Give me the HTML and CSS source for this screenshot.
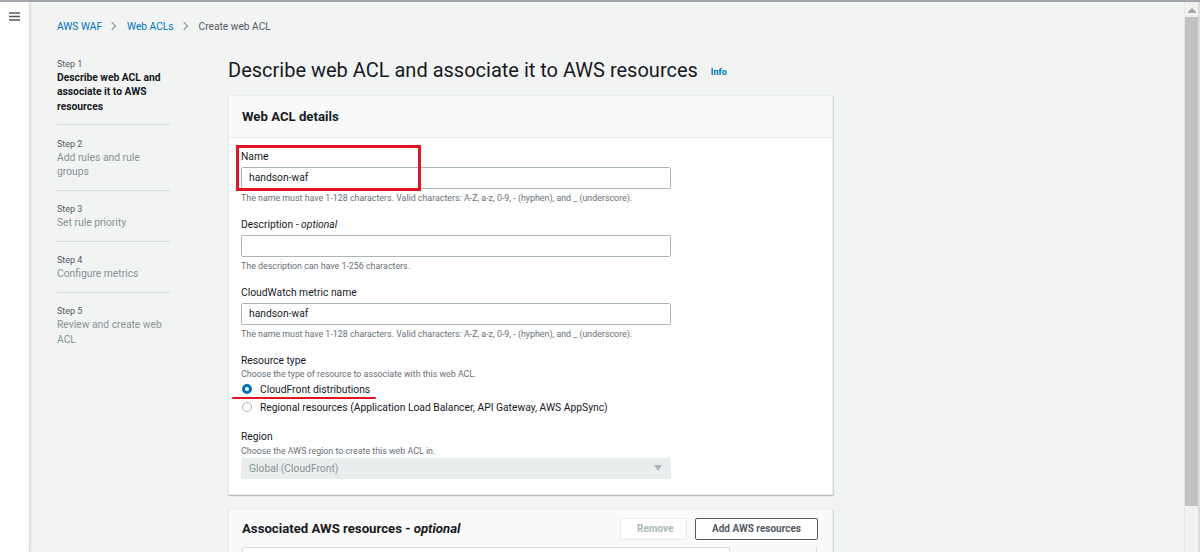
FILE: index.html
```html
<!DOCTYPE html>
<html lang="en">
<head>
    <meta charset="UTF-8">
    <meta name="viewport" content="width=device-width, initial-scale=1.0">
    <title>Create web ACL - AWS WAF</title>
    <link rel="stylesheet" href="styles.css">
</head>
<body>
    <div class="app">
        <aside class="tool-strip">
            <svg class="menu-icon" width="12" height="9" viewBox="0 0 12 9">
                <path d="M0 1h11M0 4.5h11M0 8h11" stroke="#545b64" stroke-width="1.4" fill="none"/>
            </svg>
        </aside>

        <main class="main">
            <nav class="breadcrumbs">
                <a href="#">AWS WAF</a>
                <span class="crumb-sep"></span>
                <a href="#">Web ACLs</a>
                <span class="crumb-sep"></span>
                <span class="crumb-current">Create web ACL</span>
            </nav>

            <div class="wizard">
                <ol class="steps">
                    <li class="step active">
                        <div class="step-num">Step 1</div>
                        <div class="step-title">Describe web ACL and associate it to AWS resources</div>
                    </li>
                    <li class="step">
                        <div class="step-num">Step 2</div>
                        <div class="step-title">Add rules and rule groups</div>
                    </li>
                    <li class="step">
                        <div class="step-num">Step 3</div>
                        <div class="step-title">Set rule priority</div>
                    </li>
                    <li class="step">
                        <div class="step-num">Step 4</div>
                        <div class="step-title">Configure metrics</div>
                    </li>
                    <li class="step">
                        <div class="step-num">Step 5</div>
                        <div class="step-title">Review and create web ACL</div>
                    </li>
                </ol>

                <div class="content">
                    <h1 class="page-title">Describe web ACL and associate it to AWS resources <a href="#" class="info">Info</a></h1>

                    <section class="card">
                        <div class="card-header">
                            <h2>Web ACL details</h2>
                        </div>
                        <div class="card-body">
                            <div class="field">
                                <label class="label">Name</label>
                                <input class="text-input" type="text" value="handson-waf">
                                <div class="hint">The name must have 1-128 characters. Valid characters: A-Z, a-z, 0-9, - (hyphen), and _ (underscore).</div>
                                <div class="mark-box"></div>
                            </div>
                            <div class="field">
                                <label class="label">Description - <i>optional</i></label>
                                <input class="text-input" type="text" value="">
                                <div class="hint">The description can have 1-256 characters.</div>
                            </div>
                            <div class="field">
                                <label class="label">CloudWatch metric name</label>
                                <input class="text-input" type="text" value="handson-waf">
                                <div class="hint">The name must have 1-128 characters. Valid characters: A-Z, a-z, 0-9, - (hyphen), and _ (underscore).</div>
                            </div>
                            <div class="field">
                                <label class="label">Resource type</label>
                                <div class="desc">Choose the type of resource to associate with this web ACL.</div>
                                <div class="radio-group">
                                    <div class="radio checked">
                                        <span class="radio-dot"></span>
                                        <span class="radio-text">CloudFront distributions</span>
                                    </div>
                                    <div class="radio">
                                        <span class="radio-dot"></span>
                                        <span>Regional resources (Application Load Balancer, API Gateway, AWS AppSync)</span>
                                    </div>
                                </div>
                            </div>
                            <div class="field last">
                                <label class="label">Region</label>
                                <div class="desc">Choose the AWS region to create this web ACL in.</div>
                                <div class="select disabled">
                                    <span>Global (CloudFront)</span>
                                    <span class="caret"></span>
                                </div>
                            </div>
                        </div>
                    </section>

                    <section class="card card-second">
                        <div class="card-header plain">
                            <h2>Associated AWS resources - <i>optional</i></h2>
                            <div class="actions">
                                <button class="btn" disabled>Remove</button>
                                <button class="btn">Add AWS resources</button>
                            </div>
                        </div>
                        <div class="table-tools">
                            <div class="filter"></div>
                            <div class="pager"></div>
                        </div>
                    </section>
                </div>
            </div>
        </main>

        <div class="scrollbar">
            <div class="scroll-arrow"></div>
            <div class="scroll-thumb"></div>
        </div>
    </div>
</body>
</html>
```

FILE: styles.css
```css
* {
    box-sizing: border-box;
}
body {
    margin: 0;
    font-family: Roboto, 'Liberation Sans', Arial, sans-serif;
    font-size: 10.3px;
    color: #16191f;
    border-top: 2px solid #a0a6ab;
    overflow: hidden;
}
.app {
    display: flex;
    height: 550px;
}
.tool-strip {
    width: 30px;
    flex: none;
    background: #fff;
    border-right: 1px solid #d5dbdb;
    box-shadow: 1px 0 2px rgba(0, 0, 0, 0.08);
    padding: 10px 0 0 9px;
    position: relative;
    z-index: 1;
}
.menu-icon {
    display: block;
}
.main {
    flex: 1;
    background: #f2f3f3;
    padding: 16px 0 0 27px;
    overflow: hidden;
}
.breadcrumbs {
    display: flex;
    align-items: center;
    height: 16px;
    font-size: 10.2px;
    margin-bottom: 11px;
}
.breadcrumbs a {
    color: #0073bb;
    text-decoration: none;
}
.crumb-sep {
    width: 6px;
    height: 6px;
    border-top: 1.2px solid #879596;
    border-right: 1.2px solid #879596;
    transform: rotate(45deg);
    margin: 0 12px 0 7px;
}
.crumb-current {
    color: #545b64;
}
.wizard {
    display: flex;
    gap: 58px;
}
.steps {
    list-style: none;
    margin: 0;
    padding: 0;
    width: 113px;
    flex: none;
}
.step {
    padding: 11.5px 0 10px;
    border-bottom: 1px solid #d5dbdb;
    line-height: 14.5px;
}
.step:last-child {
    border-bottom: none;
}
.step-num {
    font-size: 9px;
    color: #545b64;
    line-height: 14px;
}
.step-title {
    font-size: 10.3px;
    color: #879596;
}
.step.active .step-title {
    color: #16191f;
    font-weight: bold;
}
.content {
    width: 605px;
    flex: none;
}
.page-title {
    margin: 11px 0 9px;
    font-size: 20px;
    font-weight: 400;
    line-height: 28px;
    color: #16191f;
    white-space: nowrap;
}
.info {
    font-size: 9px;
    font-weight: bold;
    color: #0073bb;
    text-decoration: none;
    margin-left: 8px;
    vertical-align: middle;
}
.card {
    background: #fff;
    border: 1px solid #eaeded;
    box-shadow: 0 1px 1px rgba(0, 31, 61, 0.15), 1px 1px 1px rgba(0, 31, 61, 0.1);
}
.card-header {
    height: 42px;
    background: #fafafa;
    border-bottom: 1px solid #eaeded;
    padding: 0 13px;
    display: flex;
    align-items: center;
    justify-content: space-between;
}
.card-header h2 {
    margin: 0;
    font-size: 13.2px;
    font-weight: bold;
}
.card-header h2 i {
    font-weight: bold;
}
.card-body {
    padding: 11px 12px 15px;
}
.field {
    position: relative;
    margin-bottom: 13px;
}
.field.last {
    margin-bottom: 0;
}
.label {
    display: block;
    line-height: 15px;
    font-size: 10.3px;
    margin-bottom: 3px;
}
.text-input {
    display: block;
    width: 430px;
    height: 22px;
    border: 1px solid #aab7b8;
    border-radius: 2px;
    padding: 0 7px;
    font-family: inherit;
    font-size: 10.3px;
    color: #16191f;
    background: #fff;
}
.hint {
    font-size: 8.85px;
    color: #687078;
    line-height: 12px;
    margin-top: 3px;
}
.desc {
    font-size: 8.85px;
    color: #687078;
    line-height: 12px;
    margin-top: -2.5px;
}
.radio-group {
    padding-left: 1px;
}
.radio {
    display: flex;
    align-items: center;
    gap: 8px;
    height: 18px;
    font-size: 10.3px;
}
.radio-dot {
    width: 10px;
    height: 10px;
    border-radius: 50%;
    border: 1px solid #aab7b8;
    background: #fff;
    flex: none;
}
.radio.checked .radio-dot {
    border: 3px solid #0073bb;
}
.radio-text {
    position: relative;
}
/* red hand-drawn underline from the screenshot */
.radio-text::after {
    content: "";
    position: absolute;
    left: -28px;
    right: -6px;
    top: 14px;
    height: 2px;
    background: #e3141f;
    border-radius: 1px;
}
.select {
    margin-top: 1px;
    width: 430px;
    height: 21px;
    display: flex;
    align-items: center;
    justify-content: space-between;
    padding: 0 9px 0 8px;
    background: #eaeded;
    color: #879596;
    font-size: 10.3px;
    border-radius: 2px;
}
.caret {
    width: 0;
    height: 0;
    border-left: 4px solid transparent;
    border-right: 4px solid transparent;
    border-top: 6px solid #aab7b8;
}
.mark-box {
    position: absolute;
    left: -5px;
    top: -4px;
    width: 185px;
    height: 46px;
    border: 3px solid #e3141f;
}
.card-second {
    margin-top: 14px;
    background: #fafafa;
}
.card-header.plain {
    border-bottom: none;
    height: auto;
    padding: 8px 14px 0 13px;
}
.actions {
    display: flex;
    gap: 8px;
}
.btn {
    height: 22px;
    padding: 0 16px;
    border: 1px solid #545b64;
    border-radius: 2px;
    background: #fff;
    font-family: inherit;
    font-size: 10px;
    font-weight: bold;
    color: #545b64;
}
.btn:disabled {
    border-color: #eaeded;
    color: #aab7b8;
    width: 67px;
}
.table-tools {
    display: flex;
    padding: 7px 13px 0;
    gap: 86px;
}
.filter {
    width: 488px;
    height: 20px;
    border: 1px solid #d5dbdb;
    border-bottom: none;
    background: #fff;
    border-radius: 2px 2px 0 0;
}
.pager {
    width: 1px;
    height: 20px;
    background: #d5dbdb;
}
.scrollbar {
    width: 16px;
    flex: none;
    background: #f1f1f1;
    border-left: 1px solid #e6e6e6;
    border-right: 2px solid #dcdcdc;
    display: flex;
    flex-direction: column;
    align-items: center;
}
.scroll-arrow {
    margin: 6px 0 5px;
    width: 0;
    height: 0;
    border-left: 4px solid transparent;
    border-right: 4px solid transparent;
    border-bottom: 4px solid #a3a3a3;
    box-shadow: 0 1px 0 #a3a3a3;
}
.scroll-thumb {
    width: 13px;
    height: 489px;
    background: #c1c1c1;
}
```
